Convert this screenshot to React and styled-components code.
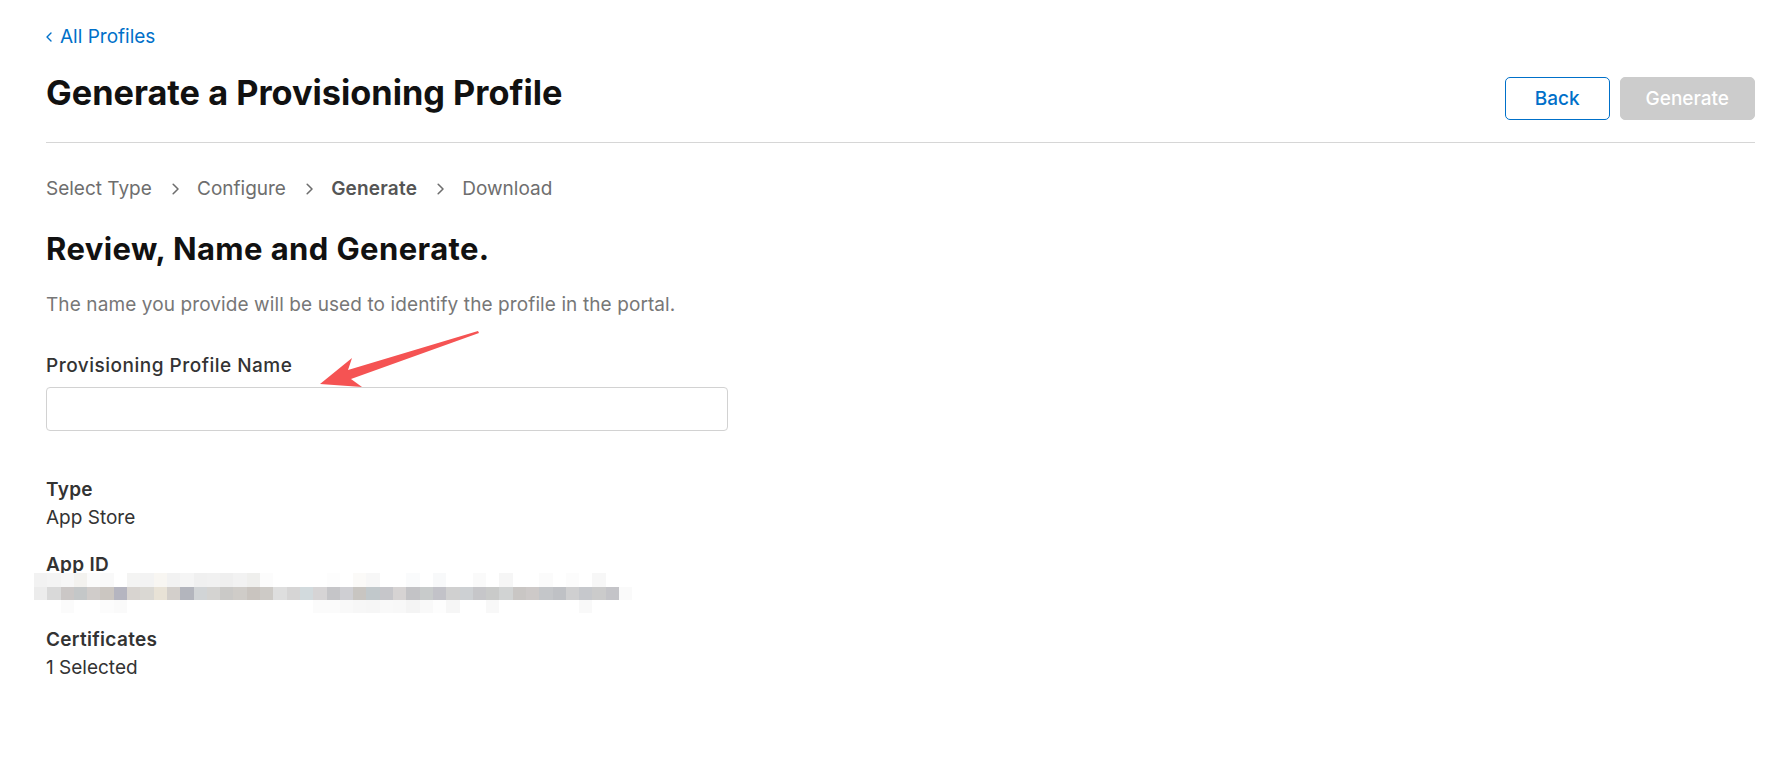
import React from 'react';
import styled, { createGlobalStyle } from 'styled-components';

const GlobalStyle = createGlobalStyle`
  body {
    margin: 0;
    background: #fff;
    font-family: Inter, "Noto Sans", sans-serif;
    color: #333;
  }
`;

const Page = styled.div`
  position: relative;
  padding: 25px 33px 60px 46px;
`;

const BackLink = styled.a`
  display: inline-flex;
  align-items: center;
  gap: 8px;
  color: #0070c9;
  font-size: 19px;
  line-height: 24px;
  text-decoration: none;
`;

const Header = styled.div`
  display: flex;
  justify-content: space-between;
  align-items: flex-start;
  margin-top: 24px;
  padding-bottom: 22px;
  border-bottom: 1px solid #d6d6d6;
`;

const Title = styled.h1`
  margin: 0;
  font-size: 34.3px;
  line-height: 40px;
  font-weight: 700;
  color: #111;
`;

const Actions = styled.div`
  display: flex;
  gap: 10px;
  margin-top: 4px;
`;

const Button = styled.button`
  height: 43px;
  padding: 0 ${({ $primary }) => ($primary ? '25px' : '29px')};
  border-radius: 5px;
  font-family: inherit;
  font-size: 19px;
  font-weight: 500;
  border: 1px solid ${({ $primary }) => ($primary ? '#cccccc' : '#0070c9')};
  background: ${({ $primary }) => ($primary ? '#cccccc' : '#fff')};
  color: ${({ $primary }) => ($primary ? '#fff' : '#0070c9')};
`;

const Steps = styled.ol`
  display: flex;
  align-items: center;
  gap: 18px;
  list-style: none;
  margin: 34px 0 0;
  padding: 0;
`;

const Step = styled.li`
  display: flex;
  align-items: center;
  gap: 20px;
  font-size: 19px;
  line-height: 24px;
  color: ${({ $current }) => ($current ? '#555' : '#6e6e6e')};
  font-weight: ${({ $current }) => ($current ? 600 : 400)};
  letter-spacing: ${({ $current }) => ($current ? '0.2px' : '0')};
`;

const Heading = styled.h2`
  margin: 30px 0 0;
  font-size: 31px;
  line-height: 36px;
  font-weight: 700;
  letter-spacing: 0.4px;
  color: #111;
`;

const Description = styled.p`
  margin: 26px 0 0;
  font-size: 19px;
  line-height: 24px;
  letter-spacing: 0.1px;
  color: #777;
`;

const Label = styled.label`
  display: block;
  margin-top: 37px;
  font-size: 19px;
  line-height: 24px;
  font-weight: 500;
  letter-spacing: 0.5px;
  color: #333;
`;

const Input = styled.input`
  display: block;
  box-sizing: border-box;
  width: 682px;
  height: 44px;
  margin-top: 9px;
  border: 1px solid #d2d2d2;
  border-radius: 4px;
  font-family: inherit;
  font-size: 19px;
  padding: 0 12px;
`;

const Details = styled.dl`
  display: flex;
  flex-direction: column;
  gap: 19px;
  margin: 45px 0 0;
`;

const Detail = styled.div`
  font-size: 19px;
  line-height: 28px;
`;

const Term = styled.dt`
  font-weight: 600;
  letter-spacing: 0.3px;
  color: #333;
`;

const Value = styled.dd`
  margin: 0;
  color: #333;
`;

const Mosaic = styled.div`
  display: grid;
  grid-template-rows: 14px 13px 13px;
  grid-auto-flow: column;
  grid-auto-columns: 13.3px;
  height: 40px;
  margin: -6px 0 -6px -12px;
  border-radius: 8px 0 0 8px;
  filter: blur(0.4px);
`;

const Cell = styled.span`
  display: block;
`;

const Arrow = styled.svg`
  position: absolute;
  left: 300px;
  top: 320px;
  pointer-events: none;
`;

const Chevron = ({ color = '#6e6e6e', size = 12 }) => (
  <svg width={size * 0.6} height={size} viewBox="0 0 6 10" fill="none">
    <path d="M1 1l4 4-4 4" stroke={color} strokeWidth="1.3" strokeLinecap="round" strokeLinejoin="round" />
  </svg>
);

const BackChevron = () => (
  <svg width="6" height="10" viewBox="0 0 6 10" fill="none">
    <path d="M5 1L1 5l4 4" stroke="#0070c9" strokeWidth="1.4" strokeLinecap="round" strokeLinejoin="round" />
  </svg>
);

const steps = ['Select Type', 'Configure', 'Generate', 'Download'];

// pixelated placeholder for the blurred App ID
const mainRow = ['#d6d8dc', '#d9d9d9', '#cbc7c6', '#c4c7c8', '#d0ccca', '#cbc6c1', '#b5b5c0', '#d8d4d0', '#dad8d3', '#e8e2d6',
  '#d3cfcb', '#b3b5bd', '#d1d4d6', '#d4d3d1', '#cac9c7', '#cfccc8', '#c9c4bf', '#cdcac6', '#dedede', '#d6d5d5',
  '#d2dadd', '#d6d4d5', '#c5c5c8', '#cfcfd3', '#c8c5c1', '#c1c8cb', '#c6c6ca', '#d6d3d3', '#c3c3c6', '#c8cbcb',
  '#c2c2c8', '#d0d0d0', '#cdd0d3', '#c6c6c9', '#c9cac9', '#d1d3d3', '#c9c6c4', '#cdc9c8', '#c4c6c9', '#bfc1c5',
  '#cfcfd0', '#c6c8cc', '#cbcbcb', '#c4c4c8', '#fafafa'];
const topRow = ['#f2f2f2', '#f4f4f4', '#f7f7f7', '#f3f2ef', '#fbfbfb', '#f9f9f9', '#ffffff', '#f4f4f3', '#f3f3f3', '#f8f6f2',
  '#f2f2f2', '#f5f5f5', '#f0f0f0', '#f1f1f1', '#efefef', '#f2f2f2', '#efefed', '#fcfcfc', '#ffffff', '#ffffff',
  '#ffffff', '#ffffff', '#fdfdfd', '#ffffff', '#fbfaf8', '#f7f7f7', '#ffffff', '#ffffff', '#fafbfc', '#ffffff',
  '#f8f9fa', '#ffffff', '#ffffff', '#fafafa', '#ffffff', '#f6f6f6', '#ffffff', '#ffffff', '#fbfbfb', '#ffffff',
  '#fcfcfc', '#ffffff', '#f7f7f7', '#ffffff', '#ffffff'];
const bottomRow = ['#ffffff', '#ffffff', '#fbfbfb', '#ffffff', '#ffffff', '#fcfcfc', '#fafafa', '#ffffff', '#ffffff', '#ffffff',
  '#ffffff', '#ffffff', '#ffffff', '#ffffff', '#ffffff', '#ffffff', '#ffffff', '#ffffff', '#ffffff', '#ffffff',
  '#ffffff', '#fbfbfb', '#fbfbfb', '#f9f9f9', '#f7f7f7', '#f6f6f6', '#f9f9f9', '#f8f8f8', '#f4f4f4', '#f9f9f9',
  '#fdfdfd', '#f6f6f6', '#ffffff', '#ffffff', '#f8f8f8', '#ffffff', '#ffffff', '#ffffff', '#ffffff', '#ffffff',
  '#ffffff', '#f9f9f9', '#ffffff', '#ffffff', '#ffffff'];

const BlurredId = () => (
  <Mosaic>
    {mainRow.map((c, i) => (
      <React.Fragment key={i}>
        <Cell style={{ background: topRow[i] }} />
        <Cell style={{ background: i === 0 ? '#ececec' : c }} />
        <Cell style={{ background: bottomRow[i] }} />
      </React.Fragment>
    ))}
  </Mosaic>
);

const details = [
  { term: 'Type', value: 'App Store' },
  { term: 'App ID', value: null },
  { term: 'Certificates', value: '1 Selected' },
];

const App = () => (
  <>
    <GlobalStyle />
    <Page>
      <BackLink href="#">
        <BackChevron />
        All Profiles
      </BackLink>

      <Header>
        <Title>Generate a Provisioning Profile</Title>
        <Actions>
          <Button>Back</Button>
          <Button $primary disabled>Generate</Button>
        </Actions>
      </Header>

      <Steps>
        {steps.map((step, i) => (
          <Step key={step} $current={step === 'Generate'}>
            {step}
            {i < steps.length - 1 && <Chevron />}
          </Step>
        ))}
      </Steps>

      <Heading>Review, Name and Generate.</Heading>
      <Description>The name you provide will be used to identify the profile in the portal.</Description>

      <Label htmlFor="profile-name">Provisioning Profile Name</Label>
      <Input id="profile-name" type="text" />

      <Details>
        {details.map(d => (
          <Detail key={d.term}>
            <Term>{d.term}</Term>
            <Value>{d.value ?? <BlurredId />}</Value>
          </Detail>
        ))}
      </Details>

      <Arrow width="190" height="75" viewBox="300 320 190 75">
        <polygon
          points="320,384 352,358 348,370 478,331 479,333 351,379 362,387"
          fill="#f55353"
        />
      </Arrow>
    </Page>
  </>
);

export default App;
